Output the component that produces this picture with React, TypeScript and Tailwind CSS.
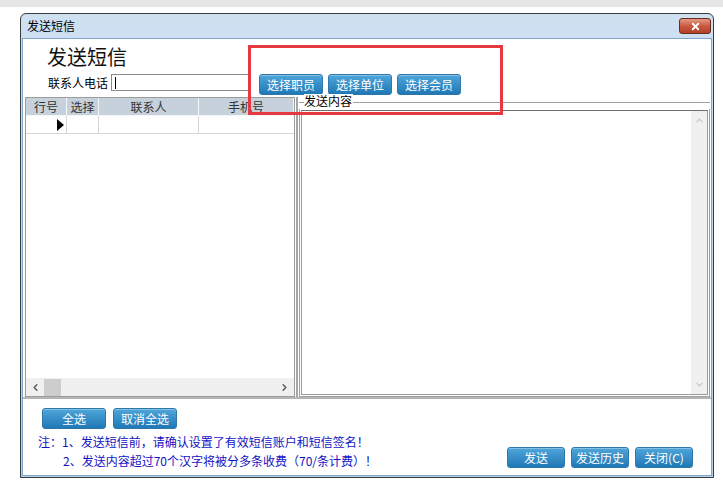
import { ChevronLeft, ChevronRight, ChevronUp, ChevronDown, X } from "lucide-react";

const FONT = "font-['SimSun','Noto_Sans_CJK_SC',sans-serif]";

function BlueButton({ label, w }: { label: string; w: string }) {
  return (
    <button
      className={[
        "h-[21px] rounded-[3px] border border-[#2f77a8] bg-gradient-to-b from-[#4ea6da] to-[#1f78b6] text-[12px] leading-none text-white shadow-[inset_0_1px_0_rgba(255,255,255,0.3)]",
        w,
      ].join(" ")}
    >
      {label}
    </button>
  );
}

const COLS = [
  { label: "行号", w: "w-[41px]" },
  { label: "选择", w: "w-[32px]" },
  { label: "联系人", w: "w-[100px]" },
  { label: "手机号", w: "flex-1" },
];

export default function App() {
  return (
    <div className={`relative h-[485px] w-[723px] overflow-hidden bg-white ${FONT}`}>
      {/* desktop strip */}
      <div className="h-[7px] bg-[#e6e6e6]" />

      {/* window */}
      <div className="ml-[20px] mt-[6px] flex h-[465px] w-[694px] flex-col rounded-t-[6px] border border-[#3b3b3b] bg-gradient-to-b from-[#cfe0f1] to-[#b9cfe7]">
        {/* title bar */}
        <div className="flex h-[24px] shrink-0 items-center justify-between pl-[6px] pr-[2px]">
          <span className="text-[12px] text-black">发送短信</span>
          <div className="flex h-[16px] w-[32px] items-center justify-center rounded-[3px] border border-[#6b2a1e] bg-gradient-to-b from-[#e39a86] via-[#c95a41] to-[#b3402a]">
            <X size={11} strokeWidth={4} className="text-white" />
          </div>
        </div>

        {/* body */}
        <div className="mx-[1px] mb-[1px] flex flex-1 flex-col border border-[#7fa6cb] bg-white">
          <div className="pl-[24px] pt-[6px] text-[20px] leading-[24px] text-[#111]">发送短信</div>

          <div className="mt-[5px] flex h-[21px] items-start">
            <span className="ml-[25px] mt-[1px] text-[12px] leading-[16px] text-black">联系人电话</span>
            <div className="ml-[3px] flex h-[17px] w-[138px] items-center border border-[#8a8a8a] border-r-0 pl-[3px]">
              <div className="h-[12px] w-[1px] bg-black" />
            </div>
            <div className="ml-[10px] flex gap-[5px]">
              <BlueButton label="选择职员" w="w-[64px]" />
              <BlueButton label="选择单位" w="w-[64px]" />
              <BlueButton label="选择会员" w="w-[64px]" />
            </div>
          </div>

          {/* main area */}
          <div className="mt-[2px] flex h-[300px]">
            {/* grid */}
            <div className="ml-[2px] flex w-[270px] flex-col border border-[#9c9c9c] bg-white">
              <div className="flex h-[18px] bg-[#c7d1dc] text-[12px] text-[#333]">
                {COLS.map((c) => (
                  <div
                    key={c.label}
                    className={`${c.w} flex items-center justify-center border-r border-b border-[#f4f6f8]`}
                  >
                    {c.label}
                  </div>
                ))}
              </div>
              <div className="flex h-[18px]">
                <div className="flex w-[41px] items-center justify-end border-r border-b border-[#d6d6d6] pr-[2px]">
                  <span className="h-0 w-0 border-y-[6px] border-l-[7px] border-y-transparent border-l-black" />
                </div>
                <div className="w-[32px] border-r border-b border-[#d6d6d6]" />
                <div className="w-[100px] border-r border-b border-[#d6d6d6]" />
                <div className="flex-1 border-b border-[#d6d6d6]" />
              </div>
              <div className="flex-1" />
              <div className="flex h-[18px] items-center bg-[#f0f0f0]">
                <ChevronLeft size={11} strokeWidth={3} className="ml-[4px] text-[#555]" />
                <div className="ml-[3px] h-[17px] w-[17px] bg-[#cdcdcd]" />
                <div className="flex-1" />
                <ChevronRight size={11} strokeWidth={3} className="mr-[4px] text-[#555]" />
              </div>
            </div>

            {/* splitter */}
            <div className="mx-[1px] w-[2px] border-x border-[#a5a5a5]" />

            {/* send content group */}
            <div className="flex flex-1 flex-col pr-[1px]">
              <div className="relative h-[12px]">
                <div className="absolute left-0 right-0 top-[5px] border-t border-[#a0a0a0] shadow-[0_1px_0_#fff]" />
                <span className="absolute -top-[3px] left-[5px] bg-white pr-[1px] text-[12px] leading-[14px] text-black">
                  发送内容
                </span>
              </div>
              <div className="flex flex-1 border-x border-b border-[#a0a0a0] p-[1px]">
                <div className="flex flex-1 border border-[#9a9a9a] border-t-[#6e6e6e]">
                  <div className="flex-1" />
                  <div className="flex w-[16px] flex-col items-center justify-between bg-[#f0f0f0] py-[4px]">
                    <ChevronUp size={11} strokeWidth={2.5} className="text-[#c4c4c4]" />
                    <ChevronDown size={11} strokeWidth={2.5} className="text-[#c4c4c4]" />
                  </div>
                </div>
              </div>
            </div>
          </div>

          {/* bottom panel */}
          <div className="flex flex-1 flex-col border-t-2 border-[#b5b5b5]">
            <div className="ml-[19px] mt-[9px] flex gap-[7px]">
              <BlueButton label="全选" w="w-[64px]" />
              <BlueButton label="取消全选" w="w-[64px]" />
            </div>
            <div className="flex items-end">
              <div className="ml-[15px] mt-[3px] text-[12px] leading-[19px] text-[#1212c4]">
                <div>注：1、发送短信前，请确认设置了有效短信账户和短信签名！</div>
                <div className="pl-[25px]">2、发送内容超过70个汉字将被分多条收费（70/条计费）！</div>
              </div>
              <div className="ml-auto mb-[2px] mr-[18px] flex gap-[6px]">
                <BlueButton label="发送" w="w-[58px]" />
                <BlueButton label="发送历史" w="w-[58px]" />
                <BlueButton label="关闭(C)" w="w-[58px]" />
              </div>
            </div>
          </div>
        </div>
      </div>

      {/* annotation */}
      <div className="absolute left-[248px] top-[45px] h-[70px] w-[255px] border-[3px] border-[#e5393f]" />
    </div>
  );
}
